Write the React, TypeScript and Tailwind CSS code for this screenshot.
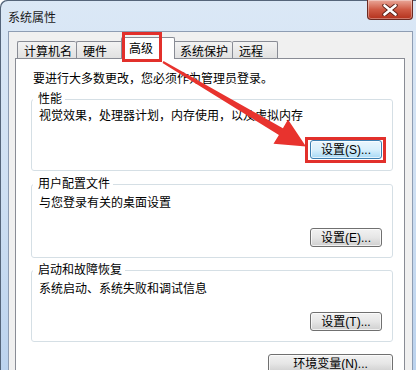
import type { ReactNode } from "react"

const tabs = [
  { label: "计算机名", w: "w-[59px]" },
  { label: "硬件", w: "w-[47px]" },
  { label: "高级", w: "w-[54px]", active: true },
  { label: "系统保护", w: "w-[59px]" },
  { label: "远程", w: "w-[46px]", last: true },
]

function WinButton({ children, width, hot }: { children: ReactNode; width: string; hot?: boolean }) {
  // Win7 style push button, "hot" = mouse-over blue look + red annotation box
  const look = hot
    ? "border-[#3c7fb1] bg-gradient-to-b from-[#eaf6fd] via-[#d9f0fc] to-[#a7d9f5]"
    : "border-[#707070] bg-gradient-to-b from-[#f2f2f2] via-[#e6e6e6] to-[#cfcfcf]"
  return (
    <div
      className={`${width} ${look} relative h-[19px] rounded-[3px] border flex items-center justify-center text-[12px] leading-[16px] shadow-[inset_0_0_0_1px_rgba(255,255,255,0.7)]`}
    >
      {children}
      {hot && <span className="absolute -left-[6px] -right-[5px] -top-[4px] -bottom-[5px] border-[3px] border-[#e2302b]" />}
    </div>
  )
}

function Group({
  title,
  text,
  button,
  mt,
  pt,
  btnMt,
  pb,
  hot,
}: {
  title: string
  text: string
  button: string
  mt: string
  pt: string
  btnMt: string
  pb: string
  hot?: boolean
}) {
  return (
    <fieldset className={`${mt} ${pb} ml-[15px] w-[362px] rounded-[3px] border border-[#d5dfe5]`}>
      <legend className="ml-[1px] pl-[5px] pr-[3px] leading-[16px]">{title}</legend>
      <div className={`${pt} pl-[7px] leading-[16px]`}>{text}</div>
      <div className={`${btnMt} flex justify-end pr-[10px]`}>
        <WinButton width="w-[72px]" hot={hot}>
          {button}
        </WinButton>
      </div>
    </fieldset>
  )
}

export default function App() {
  return (
    <div className="relative w-[416px] h-[370px] overflow-hidden rounded-tl-[7px] bg-gradient-to-b from-[#dbe8f6] via-[#cfe0f3] to-[#bcd3ee] shadow-[inset_1px_1px_0_#55657a] text-[12px] leading-[16px] text-black font-['Liberation_Sans','Noto_Sans_CJK_SC',sans-serif]">
      {/* title bar */}
      <div className="h-[31px] flex items-start justify-between">
        <div className="pl-[8px] pt-[10px] text-[#1a1a1a]">系统属性</div>
        <div className="mr-[3px] h-[20px] w-[46px] rounded-b-[4px] border border-t-0 border-[#6b2a22] bg-gradient-to-b from-[#e9a799] via-[#cf5a44] to-[#b3301b] flex items-center justify-center shadow-[inset_0_0_0_1px_rgba(255,255,255,0.35)]">
          <svg width="16" height="12" viewBox="0 0 16 12">
            <path d="M2.5 1.5 L13.5 10.5 M13.5 1.5 L2.5 10.5" stroke="#5a2219" strokeWidth="4.4" strokeLinecap="round" />
            <path d="M2.5 1.5 L13.5 10.5 M13.5 1.5 L2.5 10.5" stroke="#ffffff" strokeWidth="2.6" strokeLinecap="round" />
          </svg>
        </div>
      </div>

      {/* client area */}
      <div className="ml-[8px] mr-[3px] h-[339px] border-l border-t border-r border-[#8e9db3] bg-[#f0f0f0] pt-[5px] pl-[6px] pr-[7px] flex flex-col">
        {/* tabs */}
        <div className="relative z-10 h-[21px] flex items-end pl-[2px]">
          {tabs.map((t) =>
            t.active ? (
              <div
                key={t.label}
                className={`${t.w} -mx-[2px] -mb-px h-[22px] relative z-10 rounded-t-[2px] border-x border-t border-[#898c95] bg-white pl-[7px] pt-[3px]`}
              >
                {t.label}
              </div>
            ) : (
              <div
                key={t.label}
                className={`${t.w} h-[17px] border-l border-t ${t.last ? "border-r" : ""} rounded-t-[2px] border-[#898c95] bg-gradient-to-b from-[#f3f3f3] to-[#e1e1e1] pl-[6px] pt-[2px]`}
              >
                {t.label}
              </div>
            )
          )}
        </div>

        {/* tab panel */}
        <div className="flex-1 border border-[#898c95] bg-white pt-[12px]">
          <div className="ml-[17px]">要进行大多数更改，您必须作为管理员登录。</div>
          <Group
            title="性能"
            text="视觉效果，处理器计划，内存使用，以及虚拟内存"
            button="设置(S)..."
            mt="mt-[4px]"
            pt="pt-[1px]"
            btnMt="mt-[16px]"
            pb="pb-[11px]"
            hot
          />
          <Group
            title="用户配置文件"
            text="与您登录有关的桌面设置"
            button="设置(E)..."
            mt="mt-[5px]"
            pt="pt-[3px]"
            btnMt="mt-[17px]"
            pb="pb-[10px]"
          />
          <Group
            title="启动和故障恢复"
            text="系统启动、系统失败和调试信息"
            button="设置(T)..."
            mt="mt-[4px]"
            pt="pt-[3px]"
            btnMt="mt-[15px]"
            pb="pb-[10px]"
          />
          <div className="mt-[12px] ml-[15px] w-[362px] flex justify-end">
            <WinButton width="w-[125px]">环境变量(N)...</WinButton>
          </div>
        </div>
      </div>

      {/* annotation: red box round the tab */}
      <div className="absolute left-[122px] top-[32px] w-[40px] h-[30px] border-[3px] border-[#e2302b] z-20" />

      {/* annotation: red arrow */}
      <svg className="absolute left-0 top-0 z-20 pointer-events-none" width="416" height="370" viewBox="0 0 416 370">
        <polygon
          points="163.5,61.1 282.9,128.3 288,119.5 306,146.5 273.5,143.8 278.9,135.1 162.5,62.9"
          fill="#e8332e"
        />
      </svg>
    </div>
  )
}
